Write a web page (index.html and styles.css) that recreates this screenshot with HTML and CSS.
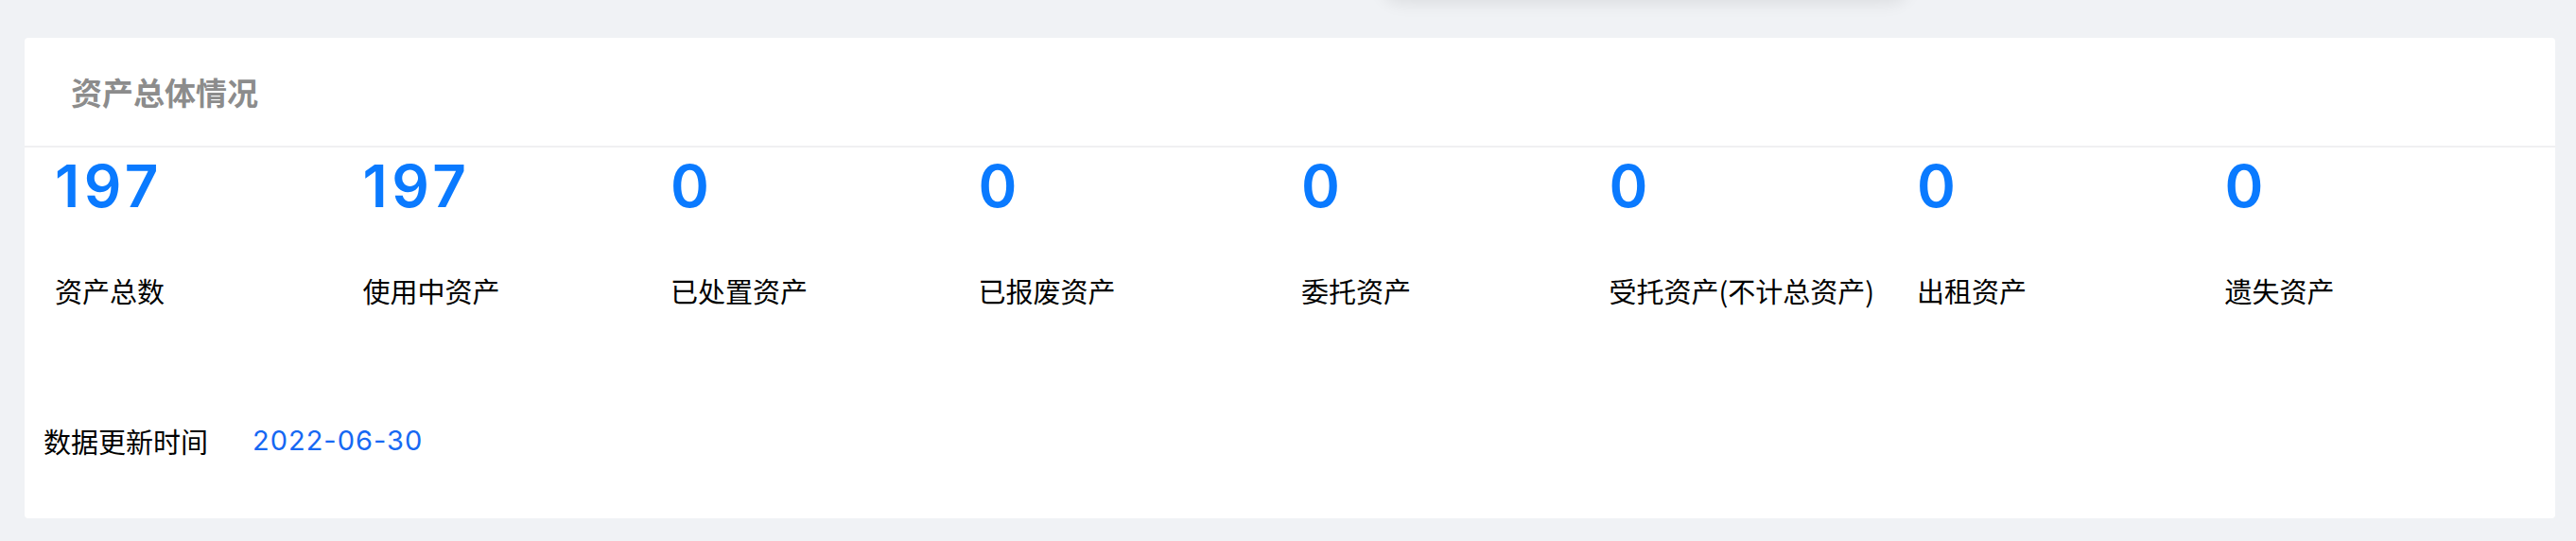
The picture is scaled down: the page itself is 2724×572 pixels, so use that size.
FILE: index.html
```html
<!DOCTYPE html>
<html lang="zh-CN">
<head>
<meta charset="utf-8">
<title>资产总体情况</title>
<link rel="stylesheet" href="styles.css">
</head>
<body>
<div class="page">
  <div class="top-shadow"></div>
  <section class="card">
    <header class="card-head">
      <h2 class="card-title">资产总体情况</h2>
    </header>
    <div class="stats">
      <div class="stat-group">
        <div class="stat"><div class="stat-num">197</div><div class="stat-label">资产总数</div></div>
        <div class="stat"><div class="stat-num">197</div><div class="stat-label">使用中资产</div></div>
        <div class="stat"><div class="stat-num">0</div><div class="stat-label">已处置资产</div></div>
        <div class="stat"><div class="stat-num">0</div><div class="stat-label">已报废资产</div></div>
      </div>
      <div class="stat-group">
        <div class="stat"><div class="stat-num">0</div><div class="stat-label">委托资产</div></div>
        <div class="stat"><div class="stat-num">0</div><div class="stat-label">受托资产(不计总资产)</div></div>
        <div class="stat"><div class="stat-num">0</div><div class="stat-label">出租资产</div></div>
        <div class="stat"><div class="stat-num">0</div><div class="stat-label">遗失资产</div></div>
      </div>
    </div>
    <div class="update-row">
      <span class="update-label">数据更新时间</span>
      <span class="update-date">2022-06-30</span>
    </div>
  </section>
</div>
</body>
</html>
```

FILE: styles.css
```css
html, body {
  margin: 0;
  padding: 0;
  background: #f0f2f5;
}

body {
  font-family: "Noto Sans CJK SC", "Noto Sans", sans-serif;
  width: 2724px;
  height: 572px;
  overflow: hidden;
}

.page {
  position: relative;
  padding: 40px 22px 24px 26px;
  box-sizing: border-box;
  height: 572px;
}

.top-shadow {
  position: absolute;
  top: -40px;
  left: 1462px;
  width: 556px;
  height: 40px;
  border-radius: 0 0 20px 20px;
  background: #f0f2f5;
  box-shadow: 0 3px 18px rgba(0, 0, 0, 0.09);
}

.card {
  background: #ffffff;
  border-radius: 4px;
  height: 508px;
  display: flex;
  flex-direction: column;
}

.card-head {
  height: 114px;
  border-bottom: 2px solid #f0f0f2;
  display: flex;
  align-items: center;
  padding-left: 49px;
}

.card-title {
  margin: 0;
  font-size: 33px;
  font-weight: 700;
  color: #8c8c8c;
  line-height: 40px;
}

.stats {
  display: grid;
  grid-template-columns: 1fr 1fr;
  column-gap: 16px;
  padding: 10px 24px 0 32px;
}

.stat-group {
  display: grid;
  grid-template-columns: repeat(4, 1fr);
}

.stat {
  display: flex;
  flex-direction: column;
}

.stat-num {
  font-family: Inter, "Liberation Sans", sans-serif;
  font-size: 62px;
  font-weight: 560;
  line-height: 62px;
  color: #0a7aff;
  letter-spacing: 4.5px;
}

.stat-label {
  margin-top: 59px;
  font-size: 29px;
  line-height: 40px;
  color: #000000;
  white-space: nowrap;
}

.update-row {
  display: flex;
  align-items: center;
  gap: 47px;
  padding-left: 20px;
  margin-top: 119px;
  height: 40px;
}

.update-label {
  font-size: 29px;
  line-height: 40px;
  color: #000000;
}

.update-date {
  font-family: Inter, "Liberation Sans", sans-serif;
  font-size: 29px;
  line-height: 40px;
  color: #1668f3;
  letter-spacing: 1px;
}
```
